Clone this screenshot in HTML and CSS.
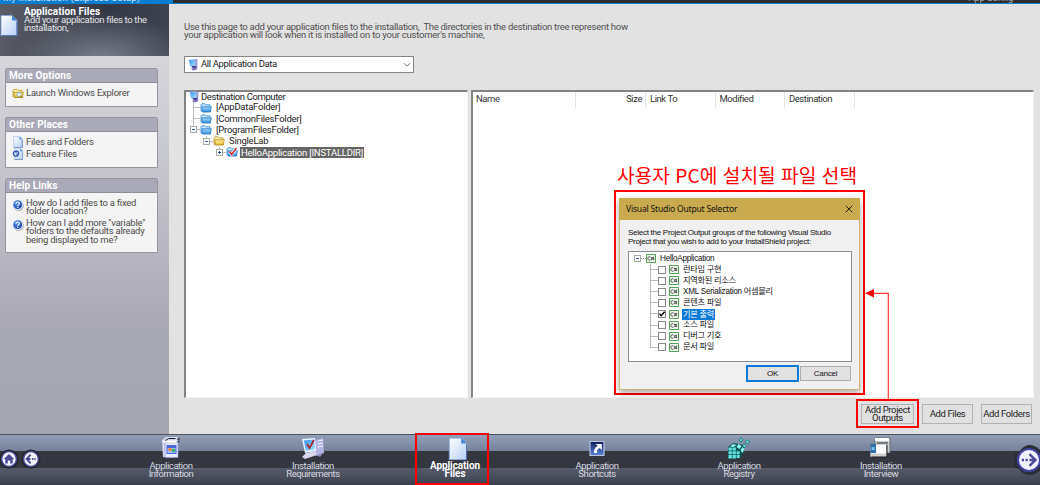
FILE: index.html
```
<!DOCTYPE html>
<html lang="ko">
<head>
<meta charset="utf-8">
<title>Application Files</title>
<link rel="stylesheet" href="styles.css">
</head>
<body>
<svg class="defs" width="0" height="0">
  <defs>
    <linearGradient id="gPage" x1="0" y1="0" x2="1" y2="1"><stop offset="0" stop-color="#fff"/><stop offset="1" stop-color="#b4cff5"/></linearGradient>
    <linearGradient id="gBlue" x1="0" y1="0" x2="0" y2="1"><stop offset="0" stop-color="#a8dbfb"/><stop offset="1" stop-color="#2e8ee0"/></linearGradient>
    <linearGradient id="gYellow" x1="0" y1="0" x2="0" y2="1"><stop offset="0" stop-color="#fff0a0"/><stop offset="1" stop-color="#e5b92e"/></linearGradient>
    <linearGradient id="gScreen" x1="0" y1="0" x2="1" y2="1"><stop offset="0" stop-color="#2f8df0"/><stop offset="1" stop-color="#9fe6fc"/></linearGradient>
    <linearGradient id="gShort" x1="0" y1="0" x2="0" y2="1"><stop offset="0" stop-color="#0c1c58"/><stop offset="1" stop-color="#5b86d8"/></linearGradient>
    <radialGradient id="gHelp" cx=".35" cy=".3" r=".8"><stop offset="0" stop-color="#5c9af0"/><stop offset="1" stop-color="#1238a0"/></radialGradient>
    <symbol id="page" viewBox="0 0 18 22"><path d="M1 1h11l5 5v15H1z" fill="url(#gPage)" stroke="#7fa3dc" stroke-width=".8"/><path d="M12 1v5h5z" fill="#3f86d8"/><path d="M17 7v14.3H2" fill="none" stroke="#4564a8" stroke-width="1"/></symbol>
    <symbol id="pc" viewBox="0 0 10 12"><path d="M6 .5h3v9H6z" fill="#a9a6dc" stroke="#6e66ae" stroke-width=".5"/><path d="M.8 1l6-.3.5 6-5 .6z" fill="url(#gScreen)" stroke="#9cc8ee" stroke-width=".6"/><path d="M3.2 7.2l4.5-.4 1 1.6-4 .6z" fill="#423a86"/><path d="M3 9.5l5-.8.7 2-4 .8z" fill="#7a70bb"/></symbol>
    <symbol id="folder" viewBox="0 0 12 10"><path d="M1 8.5V1.8l1-1h3l1 1h4v2" fill="#c8e9ff" stroke="#2f86d2" stroke-width=".8"/><path d="M1.8 3.8h9.5l-.9 5.2H2.2z" fill="url(#gBlue)" stroke="#1f74c4" stroke-width=".8"/></symbol>
    <symbol id="yfolder" viewBox="0 0 12 10"><path d="M1 8.5V1.8l1-1h3l1 1h4v2" fill="#fff2b0" stroke="#b8901c" stroke-width=".8"/><path d="M1.8 3.8h9.5l-.9 5.2H2.2z" fill="url(#gYellow)" stroke="#ad8416" stroke-width=".8"/></symbol>
    <symbol id="help" viewBox="0 0 12 12"><circle cx="6.4" cy="6.5" r="5.3" fill="#98a0b4"/><circle cx="5.7" cy="5.7" r="5.3" fill="#e4eaf6"/><circle cx="5.7" cy="5.7" r="4.4" fill="url(#gHelp)"/><path d="M4 4.7c0-2.5 3.6-2.1 3.4-.1C7.3 5.7 5.8 5.6 5.8 7M5.8 7.8v1.1" fill="none" stroke="#fff" stroke-width="1.1"/></symbol>
    <symbol id="csharp" viewBox="0 0 10 9"><path d="M.5.5h9v8h-9z" fill="#f5fbf4" stroke="#51a253"/><path d="M4.5 3.1C2.8 2 1.9 3.2 1.9 4.5s1 2.4 2.6 1.4" fill="none" stroke="#333" stroke-width=".9"/><path d="M5.9 2.8v3.4M7.4 2.8v3.4M5 3.8h3.3M5 5.2h3.3" stroke="#333" stroke-width=".65"/></symbol>
  </defs>
</svg>

<div class="app">
  <header class="strip"><div class="strip-tab"><span>My Installation (Express Setup)</span></div><div class="strip-dark"><span>App Config</span></div></header>

  <div class="main">
    <aside class="side">
      <div class="banner">
        <svg class="banner-icon" viewBox="0 0 18 22"><use href="#page"/></svg>
        <div class="banner-text"><b>Application Files</b><p>Add your application files to the<br>installation,</p></div>
      </div>
      <section class="card card-more"><h2>More Options</h2>
        <div class="link"><svg width="12" height="11" viewBox="0 0 12 10"><use href="#yfolder"/><circle cx="7" cy="6" r="2.2" fill="#dff3ff" stroke="#6490b0" stroke-width=".6"/><path d="M8.5 7.5l2 2" stroke="#8a6410"/></svg><span>Launch Windows Explorer</span></div>
      </section>
      <section class="card card-places"><h2>Other Places</h2>
        <div class="link"><svg width="10" height="12"><use href="#page"/></svg><span>Files and Folders</span></div>
        <div class="link"><svg width="12" height="12" viewBox="0 0 12 12"><svg x="1.5" width="10" height="12"><use href="#page"/></svg><circle cx="4" cy="5.6" r="2.6" fill="#eaf2ff" stroke="#2b56bb" stroke-width="1.3"/><path d="M4 4v1.8l1.8 1" fill="none" stroke="#1a3a90" stroke-width=".8"/></svg><span>Feature Files</span></div>
      </section>
      <section class="card card-help"><h2>Help Links</h2>
        <div class="link"><svg width="12" height="12"><use href="#help"/></svg><span>How do I add files to a fixed<br>folder location?</span></div>
        <div class="link"><svg width="12" height="12"><use href="#help"/></svg><span>How can I add more "variable"<br>folders to the defaults already<br>being displayed to me?</span></div>
      </section>
    </aside>

    <main class="content">
      <p class="intro">Use this page to add your application files to the installation,&nbsp; The directories in the destination tree represent how<br><span>your application will look when it is installed on to your customer's machine,</span></p>
      <div class="combo"><svg width="10" height="12"><use href="#pc"/></svg><span>All Application Data</span><svg class="chev" width="8" height="6" viewBox="0 0 8 6"><path d="M1 1.2l3 3 3-3" fill="none" stroke="#666" stroke-width=".9"/></svg></div>
      <div class="panes">
        <div class="pane tree">
          <div class="node root"><svg width="10" height="12"><use href="#pc"/></svg><span>Destination Computer</span></div>
          <div class="node l1"><i class="twig"></i><svg width="12" height="10"><use href="#folder"/></svg><span>[AppDataFolder]</span></div>
          <div class="node l1"><i class="twig"></i><svg width="12" height="10"><use href="#folder"/></svg><span>[CommonFilesFolder]</span></div>
          <div class="node l1"><i class="twig end"><b class="box"></b></i><svg width="12" height="10"><use href="#folder"/></svg><span>[ProgramFilesFolder]</span></div>
          <div class="node l2"><i class="twig end"><b class="box"></b></i><svg width="12" height="10"><use href="#yfolder"/></svg><span>SingleLab</span></div>
          <div class="node l3"><i class="twig end"><b class="box plus"></b></i><svg width="12" height="10" viewBox="0 0 12 10"><use href="#folder"/><path d="M3.5 4.5l2.2 3L10.5.8" fill="none" stroke="#fff" stroke-width="2.6"/><path d="M3.5 4.5l2.2 3L10.5.8" fill="none" stroke="#c8201c" stroke-width="1.4"/></svg><span class="sel">HelloApplication [INSTALLDIR]</span></div>
        </div>
        <div class="pane list">
          <div class="cols"><div>Name</div><div class="num">Size</div><div>Link To</div><div>Modified</div><div>Destination</div></div>
        </div>
      </div>
      <div class="actions"><button class="btn">Add Project<br>Outputs</button><button class="btn">Add Files</button><button class="btn">Add Folders</button></div>
    </main>
  </div>

  <nav class="nav">
    <div class="step"><svg viewBox="0 0 24 24"><path d="M3 4l4-3h12l-1 18-4 3-10-1z" fill="#d9dcf6"/><path d="M6 6h13v15.5H6z" fill="#e9ebff" stroke="#8d91c8" stroke-width=".7"/><path d="M3 4h15v3H3z" fill="#fff" stroke="#a0a4c8" stroke-width=".5"/><path d="M7.5 9h10v9h-10z" fill="#4868dc"/><path d="M8.5 12h8v5h-8z" fill="#a7bdf8"/><circle cx="11" cy="13.5" r="1.8" fill="#e98a35"/><circle cx="14.5" cy="14.5" r="1.8" fill="#37ac65"/><path d="M6.5 4.5l3-2h7M18 3h3M18.5 6l2-1" stroke="#15181d" stroke-width="1" fill="none"/></svg><span>Application<br>Information</span></div>
    <div class="step"><svg viewBox="0 0 24 24"><path d="M14 4l8-2 1 15-7 3-3-2z" fill="#b4b5e3"/><path d="M17 5l5-1M17 8l5-1M17 11l5-1" stroke="#f2f2ff" stroke-width="1"/><path d="M1 3l13-1 1 13-11 2z" fill="#e5f4ff"/><path d="M3 4.5l10-1 .8 10-9 1.3z" fill="url(#gScreen)"/><path d="M5 17l9-2 2 4-12 4-3-2z" fill="#d7d7f0"/><path d="M15 19l7-2-3 4z" fill="#8f90c2"/><path d="M6 8l2.5 4L13 4" fill="none" stroke="#b5202c" stroke-width="1.7"/></svg><span>Installation<br>Requirements</span></div>
    <div class="step current"><svg viewBox="0 0 24 24"><svg x="3" y="1" width="18" height="22"><use href="#page"/></svg></svg><span>Application<br>Files</span></div>
    <div class="step"><svg viewBox="0 0 24 24"><path d="M5 5.5h14v14H5z" fill="url(#gShort)" stroke="#b8c4dc" stroke-width="1.2"/><path d="M9.2 17c-.5-3.8 1-5.5 3.7-7.3L10.5 8h6.3v6.2l-2-2.2c-2.2 1-3.2 2.4-2.7 5z" fill="#fff"/></svg><span>Application<br>Shortcuts</span></div>
    <div class="step"><svg viewBox="0 0 24 24"><path d="M1 11l5-4 11 2v7l-4 6-12 1z" fill="#0d5557"/><path d="M1.5 11.5h3.4v3H1.5zM5.5 11.5h3.4v3H5.5zM1.5 15.3h3.4v3H1.5zM5.5 15.3h3.4v3H5.5zM1.5 19h3.4v3.4H1.5zM5.5 19h3.4v3.4H5.5zM9.6 19h3v3h-3zM9.6 15.3h3v3h-3z" fill="#63dfe0"/><path d="M3 10.4l3-2.4 3.5 1-3 2zM9.5 11l2-3 3 2-2 3zM13.5 14l2-3 2 2-2 4zM15 10l2-2 3 1-2 2.5z" fill="#8ff5f2"/><path d="M12 4l2-2.2L16 4l-2 2.2zM18 5.5L20.5 4 23 6l-2.5 2zM15.5 9.5L18 8l1.5 2-2 2z" fill="#5fd9dc" stroke="#0e5c60" stroke-width=".7"/></svg><span>Application<br>Registry</span></div>
    <div class="step"><svg viewBox="0 0 24 24"><path d="M6 2h15v15H6z" fill="#c9ccd0" stroke="#55585f" stroke-width=".7"/><path d="M6 2h14v3H6z" fill="#fff"/><path d="M8 6h11v2H8z" fill="#777b83"/><path d="M1.5 8h16v12.5h-16z" fill="#fcfcfc" stroke="#777" stroke-width=".6"/><path d="M1.5 8h5.5v9H1.5z" fill="#2b6eae"/><path d="M2.6 11h3v3h-3z" fill="#79c3e5"/><path d="M1.5 17.5h16v3h-16z" fill="#cfcfcf"/><path d="M18 9v12.1H2.5" fill="none" stroke="#1f2125" stroke-width=".9"/></svg><span>Installation<br>Interview</span></div>
  </nav>
</div>

<svg class="orb orb-home" width="20" height="20" viewBox="0 0 20 20"><circle cx="10" cy="10" r="9.5" fill="#20232b"/><circle cx="10" cy="10" r="7.4" fill="#f2f2fa" stroke="#4a4a9c" stroke-width="1.4"/><path d="M4.8 10L10 5l5.2 5h-1.5v4.4h-2.5v-3H8.8v3H6.3V10z" fill="#484894"/></svg>
<svg class="orb orb-back" width="20" height="20" viewBox="0 0 20 20"><circle cx="10" cy="10" r="9.5" fill="#20232b"/><circle cx="10" cy="10" r="7.4" fill="#f2f2fa" stroke="#4a4a9c" stroke-width="1.4"/><path d="M9.6 5.6L5.6 10l4 4.4M6 10h3.6M11 10h1.4M13.4 10h1.2" fill="none" stroke="#484894" stroke-width="1.9"/></svg>
<svg class="orb orb-next" width="26" height="32" viewBox="0 0 26 32"><path d="M0 10L5 8Q10 1 15 1 21 1 26 6V27Q21 31 15 31 9 31 5 25L0 23z" fill="#2b2e37"/><circle cx="15" cy="16" r="11" fill="#f2f2fa" stroke="#4242a4" stroke-width="2"/><path d="M15.5 10.2l6 5.8-6 5.8M20.5 16h-5" fill="none" stroke="#484894" stroke-width="2.4"/><path d="M7.8 16h2.2M11.5 16h2.2" stroke="#484894" stroke-width="2.4"/></svg>

<div class="note">사용자 PC에 설치될 파일 선택</div>
<div class="frame frame-dialog"></div>
<div class="dialog">
  <div class="dlg-title"><span>Visual Studio Output Selector</span><svg width="8" height="8" viewBox="0 0 8 8"><path d="M.7.7l6.6 6.6M7.3.7L.7 7.3" stroke="#222" stroke-width="1"/></svg></div>
  <p class="dlg-text">Select the Project Output groups of the following Visual Studio<br>Project that you wish to add to your InstallShield project:</p>
  <div class="outputs">
    <div class="out top"><b class="box"></b><i class="dash"></i><svg width="10" height="9"><use href="#csharp"/></svg><span>HelloApplication</span></div>
    <div class="out"><i class="stem"></i><i class="check"></i><svg width="10" height="9"><use href="#csharp"/></svg><span>런타임 구현</span></div>
    <div class="out"><i class="stem"></i><i class="check"></i><svg width="10" height="9"><use href="#csharp"/></svg><span>지역화된 리소스</span></div>
    <div class="out"><i class="stem"></i><i class="check"></i><svg width="10" height="9"><use href="#csharp"/></svg><span>XML Serialization 어셈블리</span></div>
    <div class="out"><i class="stem"></i><i class="check"></i><svg width="10" height="9"><use href="#csharp"/></svg><span>콘텐츠 파일</span></div>
    <div class="out"><i class="stem"></i><i class="check"><svg width="6" height="6" viewBox="0 0 6 6"><path d="M.4 2.6l1.8 2L5.6.8" fill="none" stroke="#000" stroke-width="1.4"/></svg></i><svg width="10" height="9"><use href="#csharp"/></svg><span class="picked">기본 출력</span></div>
    <div class="out"><i class="stem"></i><i class="check"></i><svg width="10" height="9"><use href="#csharp"/></svg><span>소스 파일</span></div>
    <div class="out"><i class="stem"></i><i class="check"></i><svg width="10" height="9"><use href="#csharp"/></svg><span>디버그 기호</span></div>
    <div class="out"><i class="stem last"></i><i class="check"></i><svg width="10" height="9"><use href="#csharp"/></svg><span>문서 파일</span></div>
  </div>
  <div class="dlg-actions"><button class="dbtn ok">OK</button><button class="dbtn">Cancel</button></div>
</div>
<div class="frame frame-add"></div>
<div class="frame frame-step"></div>
<svg class="arrow" width="30" height="112" viewBox="0 0 30 112"><path d="M7 6.3h16.3V112" fill="none" stroke="#ff3a3a" stroke-width="1.2"/><path d="M0 6.3L9 2v8.6z" fill="#f00"/></svg>
</body>
</html>
```
FILE: styles.css
```
*{box-sizing:border-box}
body{margin:0;position:relative;width:1040px;height:485px;overflow:hidden;background:#e2e2e2;color:#333;font:9.5px/8.3px Roboto,"Noto Sans CJK KR",sans-serif;letter-spacing:-.24px}
p,h2{margin:0}
svg{display:block;flex:none}
.defs{position:absolute}
.app{display:flex;flex-direction:column;height:485px}

.strip{display:flex;height:4px;overflow:hidden}
.strip-tab,.strip-dark{height:4px;display:flex;align-items:flex-end;overflow:hidden;white-space:nowrap}
.strip-tab{width:173px;background:#0b7dd0;color:#d4e8f7;padding-left:3px;letter-spacing:.2px}
.strip-tab span,.strip-dark span{height:7px;line-height:2px}
.strip-dark{flex:1;background:#2d2d30;border-bottom:1px solid #1783cf;color:#aaa;justify-content:flex-end;padding-right:27px}
.strip-dark span{height:6px}

.main{display:flex;height:430px}
.side{width:169px;background:linear-gradient(#dcdce0,#c8c8d0 35%,#a9a8b5 75%,#a6a5b2)}
.banner{height:52px;display:flex;background:radial-gradient(ellipse at 60% 110%,#7c8290 0,rgba(100,106,118,0) 60%),linear-gradient(100deg,#5b5e69 0,#484c58 30%,#343844 60%,#3f4450 100%);color:#e4e4e6;letter-spacing:-.32px}
.banner-icon{width:18px;height:23px;margin:10px 6px 0 0}
.banner-text{padding-top:3px}
.banner-text b{display:block;color:#fff;font-size:10px;line-height:9px;letter-spacing:.08px}
.card{margin:0 11px 0 5px;background:#f4f4f4;border:1px solid #94939f;border-radius:2px 2px 0 0;overflow:hidden}
.card h2{height:14px;border-bottom:1px solid #8e8d99;background:#aaa9b8;color:#fff;font-size:10px;line-height:13px;letter-spacing:.12px;padding-left:3px}
.card-more{margin-top:12px;height:39px}
.card-places{margin-top:10px;height:51px}
.card-help{margin-top:10px;height:75px}
.link{display:flex;align-items:center;padding-left:6px;color:#4c4c4c}
.link svg{margin-right:2px}
.card-more .link{margin-top:5px}
.card-places .link{height:12px}
.card-places h2{margin-bottom:4px}
.card-places .link:nth-child(2) svg{margin:0 3px 0 1px}
.card-help .link{align-items:flex-start;margin-top:6px}
.card-help .link:last-child{margin-top:3.5px}

.content{flex:1;padding:16px 6px 0 15px}
.intro{color:#505050;height:36px;padding-top:3px;letter-spacing:-.283px;white-space:nowrap}
.intro span{letter-spacing:-.23px}
.combo{width:230px;height:17px;display:flex;align-items:center;background:#fff;border:1px solid #858585;padding-left:3px;color:#222;letter-spacing:-.35px}
.combo span{margin-left:3px}
.chev{margin:1px 2px 0 auto}
.panes{display:grid;grid-template-columns:284px 563px;gap:3px;margin-top:17px;height:308px}
.pane{background:#fff;border:1px solid #f4f4f4;border-left:2px solid #848484;border-top:2px solid #848484}
.tree{padding-top:0}
.node{display:flex;align-items:center;height:11.2px;color:#222;white-space:nowrap}
.node span{margin-left:4px;letter-spacing:-.25px}
.root{padding-left:3px;height:10px}
.node.root span{margin-left:2px;letter-spacing:-.4px}
.l1{padding-left:3px}.l2{padding-left:16px}.l3{padding-left:29px}
.twig{position:relative;width:11px;height:11.2px;background:linear-gradient(#bbb,#bbb) 4px 5px/7px 1px no-repeat,linear-gradient(#bbb,#bbb) 4px 0/1px 100% no-repeat}
.twig.end{background-size:7px 1px,1px 6px}
.box{display:block;position:relative;width:7px;height:7px;background:linear-gradient(#345ba5,#345ba5) center/3px 1px no-repeat #fff;border:1px solid #aaa;flex:none}
.twig .box{margin:2px 0 0 1px}
.plus{background:linear-gradient(#345ba5,#345ba5) center/3px 1px no-repeat,linear-gradient(#345ba5,#345ba5) center/1px 3px no-repeat,#fff}
.node .sel{background:#656565;color:#fff;height:11px;line-height:11px;padding:0 1px;margin-left:2px;letter-spacing:-.22px}
.cols{display:grid;grid-template-columns:103px 70px 69.5px 69.5px 69.5px;height:16px;color:#333;letter-spacing:-.45px}
.cols div{border-right:1px solid #e4e4e4;padding-left:4px;line-height:14px}
.cols div:first-child{padding-left:3px}
.cols .num{text-align:right;padding-right:3px}
.actions{display:flex;justify-content:flex-end;gap:8px;margin-top:6px;padding-right:2px}
.btn{font:inherit;letter-spacing:-.38px;color:#222;width:51px;height:20px;padding:0;background:#e1e1e1;border:1px solid #b2b2b2;white-space:nowrap;display:flex;align-items:center;justify-content:center}
.btn:first-child{width:53px}

.nav{height:51px;display:flex;padding-left:100px;background:linear-gradient(#50545e 0 1px,#929eb5 1px,#76829b 17px,#343740 17px,#343740 34px,#565b6b 34px,#3c404d);color:#d9dbe0}
.step{width:142px;height:51px;display:flex;flex-direction:column;align-items:center;text-align:center;letter-spacing:-.42px}
.step svg{width:24px;height:24px;margin:2px 0 1.5px}
.step.current svg{margin-left:-1px}
.current{font-weight:700;color:#fff;font-size:10px;letter-spacing:-.08px}

.orb{position:absolute}
.orb-home{left:-1px;top:449px}
.orb-back{left:21px;top:449px}
.orb-next{left:1014px;top:444px}
.note{position:absolute;left:617px;top:163px;font:400 19.2px/24px "Noto Sans CJK KR",sans-serif;color:#f00;letter-spacing:0;white-space:nowrap}
.frame{position:absolute;border:2px solid #f00}
.frame-dialog{left:614px;top:190px;width:251px;height:205px}
.frame-add{left:856px;top:399px;width:63px;height:29px}
.frame-step{left:415px;top:433px;width:74px;height:52px}
.arrow{position:absolute;left:865px;top:287px}

.dialog{position:absolute;left:619px;top:198px;width:241px;height:192px;background:#f0f0f0;border:1px solid #cdb478;border-top:0;box-shadow:0 3px 7px rgba(0,0,0,.35);font:8px/9px "Liberation Sans","Noto Sans CJK KR",sans-serif;letter-spacing:-.27px;color:#111}
.dlg-title{display:flex;align-items:center;justify-content:space-between;height:22px;margin:0 -1px;padding:0 7px;background:#c9aa4f;font:8.5px/20px "Noto Sans",sans-serif;letter-spacing:-.18px}
.dlg-text{padding:8px 0 0 8px;white-space:nowrap}
.outputs{margin:5px 7px 0 8px;height:111px;background:#fff;border:1px solid #8a8d96;padding:1px 0 0 5px}
.out{display:flex;align-items:center;height:11.1px;white-space:nowrap}
.out span{margin-left:4px;line-height:10px;font-size:8.2px}
.dash{width:5px;border-top:1px dotted #999}
.stem{width:8px;height:11.1px;margin-left:16px;background:linear-gradient(#bbb,#bbb) 0 5px/8px 1px no-repeat,linear-gradient(#bbb,#bbb) 0 0/1px 100% no-repeat}
.stem.last{background-size:8px 1px,1px 6px}
.check{width:8px;height:8px;border:1px solid #888;background:#fff;margin-right:3px}
.out .picked{background:#0a78d7;color:#fff;padding:0 1px;margin-left:3px;line-height:11px}
.dlg-actions{display:flex;justify-content:flex-end;gap:2px;margin:4px 8px 0 0}
.dbtn{font:inherit;letter-spacing:-.2px;color:#111;width:51px;height:15px;padding:0;background:#e1e1e1;border:1px solid #adadad}
.ok{border:1.5px solid #0a78d7;outline:.5px solid #0a78d7}
```
